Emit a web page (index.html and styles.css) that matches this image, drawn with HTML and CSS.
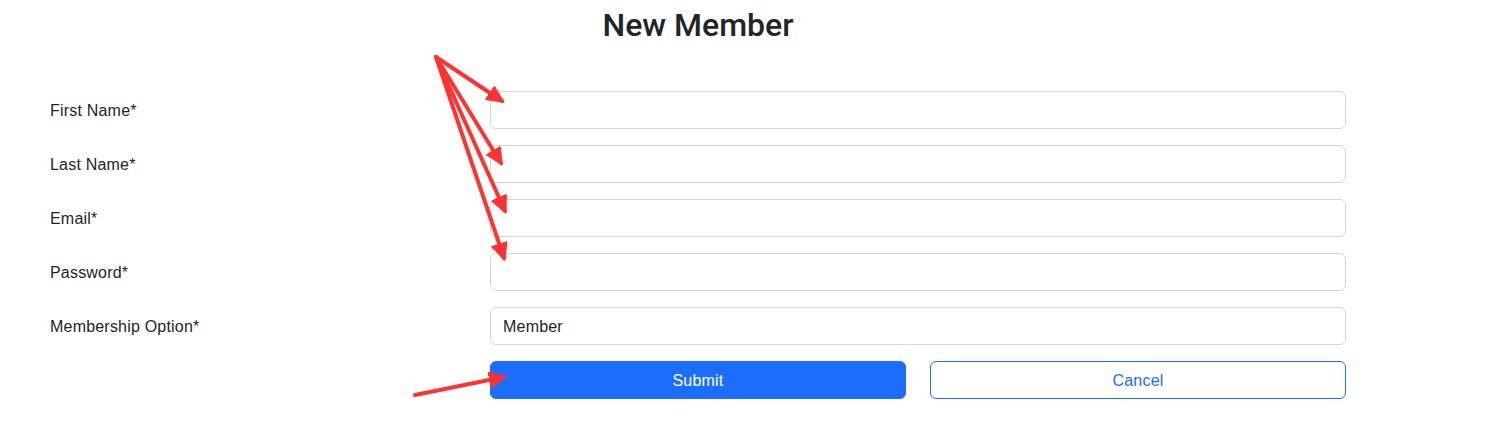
FILE: index.html
```html
<!DOCTYPE html>
<html lang="en">
<head>
<meta charset="utf-8">
<title>New Member</title>
<link rel="stylesheet" href="styles.css">
</head>
<body>
<main class="page">
  <h2 class="title">New Member</h2>
  <form class="form">
    <div class="row">
      <label class="label" for="fn">First Name*</label>
      <input class="input" id="fn" type="text">
    </div>
    <div class="row">
      <label class="label" for="ln">Last Name*</label>
      <input class="input" id="ln" type="text">
    </div>
    <div class="row">
      <label class="label" for="em">Email*</label>
      <input class="input" id="em" type="email">
    </div>
    <div class="row">
      <label class="label" for="pw">Password*</label>
      <input class="input" id="pw" type="password">
    </div>
    <div class="row">
      <label class="label" for="mo">Membership Option*</label>
      <div class="input select">Member</div>
    </div>
    <div class="row">
      <span class="label"></span>
      <div class="buttons">
        <button type="button" class="btn btn-primary">Submit</button>
        <button type="button" class="btn btn-outline">Cancel</button>
      </div>
    </div>
  </form>
  <svg class="arrows" width="1494" height="441" viewBox="0 0 1494 441">
    <defs>
      <marker id="head" markerUnits="userSpaceOnUse" markerWidth="20" markerHeight="20" refX="15" refY="8" orient="auto">
        <path d="M0 0 L17 8 L0 16 Z" fill="#ff3232" stroke="#ff3232" stroke-width="1.5" stroke-linejoin="round"/>
      </marker>
    </defs>
    <g stroke="#ff3232" stroke-width="4" stroke-linecap="round" fill="none">
      <line x1="436" y1="57" x2="502" y2="101" marker-end="url(#head)"/>
      <line x1="436" y1="57" x2="501" y2="163" marker-end="url(#head)"/>
      <line x1="436" y1="57" x2="505" y2="211" marker-end="url(#head)"/>
      <line x1="436" y1="57" x2="504" y2="258" marker-end="url(#head)"/>
      <line x1="415" y1="395" x2="504" y2="377" marker-end="url(#head)"/>
    </g>
  </svg>
</main>
</body>
</html>
```
FILE: styles.css
```css
* { box-sizing: border-box; }
html, body { margin: 0; padding: 0; background: #fff; }
body {
  font-family: "Liberation Sans", Arial, sans-serif;
  font-size: 16px;
  line-height: 1.5;
  letter-spacing: 0.2px;
  color: #212529;
}
.page {
  position: relative;
  width: 1494px;
  height: 441px;
  overflow: hidden;
}
.title {
  margin: 6px 98px 0 0;
  font-family: Roboto, "Liberation Sans", sans-serif;
  font-size: 32px;
  font-weight: 500;
  line-height: 1.2;
  letter-spacing: 0;
  text-align: center;
  color: #212529;
}
.form {
  display: flex;
  flex-direction: column;
  gap: 16px;
  margin-top: 47px;
  padding-left: 50px;
}
.row {
  display: flex;
  align-items: center;
}
.label {
  width: 440px;
  flex: none;
  padding-top: 2px;
}
.input {
  width: 856px;
  height: 38px;
  padding: 7px 12px 5px;
  border: 1px solid #d3d7dc;
  border-radius: 6px;
  font: inherit;
  letter-spacing: inherit;
  color: #212529;
  background: #fff;
  outline: none;
}
.select { line-height: 24px; }
.buttons {
  width: 856px;
  display: flex;
  gap: 24px;
}
.btn {
  flex: 1;
  height: 38px;
  padding: 2px 12px 0;
  border-radius: 6px;
  font: inherit;
  letter-spacing: inherit;
  cursor: pointer;
}
.btn-primary {
  background: #1b6efd;
  border: 1px solid #1b6efd;
  color: #fff;
}
.btn-outline {
  background: #fff;
  border: 1px solid #1b6efd;
  color: #1b6efd;
}
.arrows {
  position: absolute;
  left: 0;
  top: 0;
  pointer-events: none;
}
```
